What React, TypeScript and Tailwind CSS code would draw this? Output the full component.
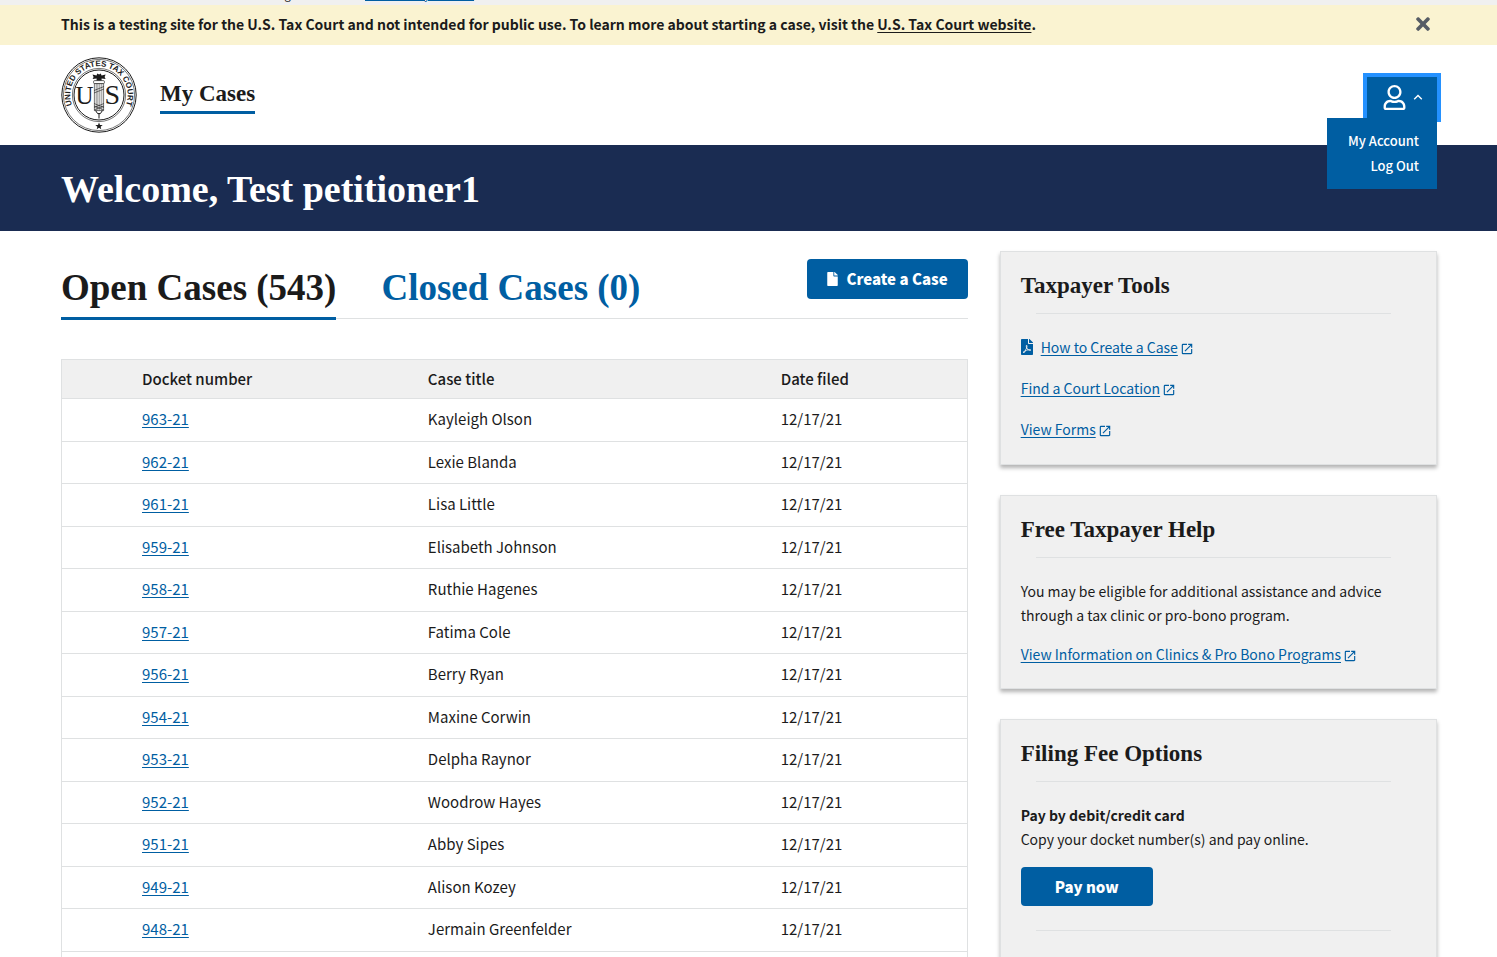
import type { ReactNode } from "react";
import { FaFile, FaFilePdf, FaRegUser, FaTimes } from "react-icons/fa";
import { MdOpenInNew } from "react-icons/md";

const cases = [
  { docket: "963-21", title: "Kayleigh Olson", filed: "12/17/21" },
  { docket: "962-21", title: "Lexie Blanda", filed: "12/17/21" },
  { docket: "961-21", title: "Lisa Little", filed: "12/17/21" },
  { docket: "959-21", title: "Elisabeth Johnson", filed: "12/17/21" },
  { docket: "958-21", title: "Ruthie Hagenes", filed: "12/17/21" },
  { docket: "957-21", title: "Fatima Cole", filed: "12/17/21" },
  { docket: "956-21", title: "Berry Ryan", filed: "12/17/21" },
  { docket: "954-21", title: "Maxine Corwin", filed: "12/17/21" },
  { docket: "953-21", title: "Delpha Raynor", filed: "12/17/21" },
  { docket: "952-21", title: "Woodrow Hayes", filed: "12/17/21" },
  { docket: "951-21", title: "Abby Sipes", filed: "12/17/21" },
  { docket: "949-21", title: "Alison Kozey", filed: "12/17/21" },
  { docket: "948-21", title: "Jermain Greenfelder", filed: "12/17/21" },
];

function CourtSeal() {
  return (
    <svg viewBox="0 0 76 76" className="size-[76px]" fill="none" stroke="#1b1b1b">
      <circle cx="38" cy="38" r="37.2" strokeWidth="1" />
      <circle cx="38" cy="38" r="35.6" strokeWidth="0.6" />
      <circle cx="38" cy="38" r="26.6" strokeWidth="0.6" />
      <circle cx="38" cy="38" r="25" strokeWidth="1" />
      <path id="seal-arc" d="M11.6 49.2 A28.7 28.7 0 1 1 64.4 49.2" stroke="none" />
      <g fill="#1b1b1b" stroke="none">
        <text fontFamily="Liberation Sans, sans-serif" fontWeight="700" fontSize="8" textAnchor="middle">
          <textPath href="#seal-arc" startOffset="50%">
            UNITED STATES TAX COURT
          </textPath>
        </text>
        <text x="23.6" y="47" fontFamily="Liberation Serif, serif" fontSize="25" textAnchor="middle">
          U
        </text>
        <text x="51.4" y="47.4" fontFamily="Liberation Serif, serif" fontSize="28" textAnchor="middle">
          S
        </text>
        <path d="M38 65.4l1 2.5 2.7.1-2.1 1.7.7 2.6-2.3-1.5-2.3 1.5.7-2.6-2.1-1.7 2.7-.1z" />
        <path d="M31.5 17.6l4 1 .8-2.2 1.8 1 1.6-1 .9 2.2 4-1-1 2.3 1 2.2-4-.6v2.4h-5v-2.4l-4 .6 1-2.2z" />
      </g>
      <rect x="32.6" y="23.6" width="10.8" height="3" rx="1" fill="#fff" strokeWidth="0.7" />
      <path d="M33.4 26.6h9.2v27h-9.2z" fill="#fff" strokeWidth="0.6" />
      <path d="M35.2 26.6v27M36.9 26.6v27M38.8 26.6v27M40.8 26.6v27" strokeWidth="0.5" />
      <path d="M33 33.5l10-4M33 36l10-4M33 49l10 4M33 46.5l10 4M33 53l10-4M33 50.5l10-4" strokeWidth="0.6" />
      <path d="M34.6 53.6l2 3h2.8l2-3M38 56v5.5" strokeWidth="1" />
    </svg>
  );
}

function ExternalLink({ children }: { children: ReactNode }) {
  return (
    <a href="#" className="inline-flex items-center gap-[2px] text-[#005ea2]">
      <span className="underline underline-offset-2">{children}</span>
      <MdOpenInNew className="mt-1 size-[14px]" />
    </a>
  );
}

function Divider() {
  return <hr className="mx-[15px] border-t border-[#dfe1e2]" />;
}

function Card({ title, children }: { title: string; children: ReactNode }) {
  return (
    <section className="border border-[#dfe1e2] bg-[#f0f0f0] pt-5 pr-[30px] pb-[22px] pl-5 shadow-[0_3px_4px_0_rgba(0,0,0,0.3)]">
      <h2 className="mb-[13px] font-['Liberation_Serif',serif] text-[23px] leading-7 font-bold">{title}</h2>
      <Divider />
      <div className="pt-[21px]">{children}</div>
    </section>
  );
}

export default function App() {
  return (
    <div className="h-screen overflow-hidden bg-white font-['Noto_Sans_CJK_SC',sans-serif] text-[15px] leading-6 text-[#1b1b1b]">
      <div className="flex h-[5px] items-end overflow-hidden bg-[#f0f0f0] pb-[3px] pl-[61px] text-[11px] leading-4 whitespace-nowrap">
        <p className="w-[286px] shrink-0 text-right">An official website of the United States government</p>
        <a href="#" className="ml-[18px] text-[#005ea2] underline decoration-1 underline-offset-1">Here's how you know</a>
      </div>

      <div className="flex h-10 items-center justify-between bg-[#faf3d1] pr-[64px] pb-[2px] pl-[61px]">
        <p className="text-[14px] font-bold">
          This is a testing site for the U.S. Tax Court and not intended for public use. To learn more about starting a case, visit the{" "}
          <a href="#" className="underline underline-offset-2">U.S. Tax Court website</a>.
        </p>
        <button type="button" aria-label="Close" className="text-[#565c65]">
          <FaTimes className="size-[20px]" />
        </button>
      </div>

      <header className="flex h-[100px] items-center pr-[60px] pl-[61px]">
        <a href="#" aria-label="United States Tax Court" className="mr-[23px]">
          <CourtSeal />
        </a>
        <nav>
          <a href="#" className="block border-b-[3px] border-[#005ea2] pt-1 pb-[3px] font-['Liberation_Serif',serif] text-[23px] leading-7 font-bold">
            My Cases
          </a>
        </nav>
        <div className="relative mt-1 ml-auto">
          <button
            type="button"
            aria-label="Account"
            aria-expanded="true"
            className="flex h-[41px] w-[70px] items-center justify-center gap-[6px] bg-[#005ea2] text-white outline-4 outline-[#2491ff]"
          >
            <FaRegUser className="size-[25px]" />
            <svg viewBox="0 0 10 10" className="size-[10px]" fill="none" stroke="currentColor" strokeWidth="1.4">
              <path d="M1.2 7.2L5 3.4l3.8 3.8" />
            </svg>
          </button>
          <ul className="absolute top-full right-0 z-10 w-[110px] bg-[#005ea2] pt-[10px] pr-[18px] pb-[11px] text-right text-[13px] leading-[25px] font-medium text-white">
            <li><a href="#">My Account</a></li>
            <li><a href="#">Log Out</a></li>
          </ul>
        </div>
      </header>

      <div className="bg-[#1a2c52] pt-[22px] pr-[60px] pb-5 pl-[61px] text-white">
        <h1 className="font-['Liberation_Serif',serif] text-[38px] leading-[44px] font-bold">Welcome, Test petitioner1</h1>
      </div>

      <main className="grid grid-cols-3 gap-8 pt-5 pr-[60px] pl-[61px]">
        <div className="col-span-2 pt-2">
          <div className="flex items-start border-b border-[#dfe1e2] font-['Liberation_Serif',serif] text-[37px] leading-[44px] font-bold">
            <button type="button" className="-mb-[2px] border-b-[3px] border-[#005ea2] pt-[7px] pb-[7px]">
              Open Cases (543)
            </button>
            <button type="button" className="ml-[45px] pt-[7px] text-[#005ea2]">
              Closed Cases (0)
            </button>
            <a
              href="#"
              className="ml-auto flex h-10 items-center gap-2 rounded bg-[#005ea2] px-5 font-['Noto_Sans_CJK_SC',sans-serif] text-[15px] leading-6 font-black text-white"
            >
              <FaFile className="h-[14px] w-[11px]" />
              Create a Case
            </a>
          </div>

          <div className="mt-10 border border-[#dfe1e2] pb-8">
            <table className="w-full table-fixed border-collapse text-left">
              <thead className="bg-[#f0f0f0]">
                <tr className="border-b border-[#dfe1e2]">
                  <th className="w-[70px]" aria-label="Status" />
                  <th className="w-[31.6%] px-[10px] py-[7px] font-medium">Docket number</th>
                  <th className="w-[39%] px-[10px] py-[7px] font-medium">Case title</th>
                  <th className="px-[10px] py-[7px] font-medium">Date filed</th>
                </tr>
              </thead>
              <tbody className="leading-[1.7]">
                {cases.map((c) => (
                  <tr key={c.docket} className="border-b border-[#dfe1e2]">
                    <td />
                    <td className="px-[10px] pt-[7px] pb-[9px]">
                      <a href="#" className="text-[#005ea2] underline underline-offset-2">{c.docket}</a>
                    </td>
                    <td className="px-[10px] pt-[7px] pb-[9px]">{c.title}</td>
                    <td className="px-[10px] pt-[7px] pb-[9px]">{c.filed}</td>
                  </tr>
                ))}
              </tbody>
            </table>
          </div>
        </div>

        <aside className="flex flex-col gap-[30px] text-[14px]">
          <Card title="Taxpayer Tools">
            <ul className="flex flex-col gap-[17px] pb-px">
              <li className="flex items-center">
                <FaFilePdf className="mr-2 h-4 w-3 text-[#005ea2]" />
                <ExternalLink>How to Create a Case</ExternalLink>
              </li>
              <li className="flex"><ExternalLink>Find a Court Location</ExternalLink></li>
              <li className="flex"><ExternalLink>View Forms</ExternalLink></li>
            </ul>
          </Card>
          <Card title="Free Taxpayer Help">
            <p className="mb-[15px]">You may be eligible for additional assistance and advice through a tax clinic or pro-bono program.</p>
            <p className="flex"><ExternalLink>View Information on Clinics &amp; Pro Bono Programs</ExternalLink></p>
          </Card>
          <Card title="Filing Fee Options">
            <p className="font-bold">Pay by debit/credit card</p>
            <p>Copy your docket number(s) and pay online.</p>
            <a href="#" className="mt-4 mb-6 flex h-[39px] w-[132px] items-center justify-center rounded bg-[#005ea2] text-[15px] font-black text-white">
              Pay now
            </a>
            <Divider />
            <div className="h-8" />
          </Card>
        </aside>
      </main>
    </div>
  );
}
